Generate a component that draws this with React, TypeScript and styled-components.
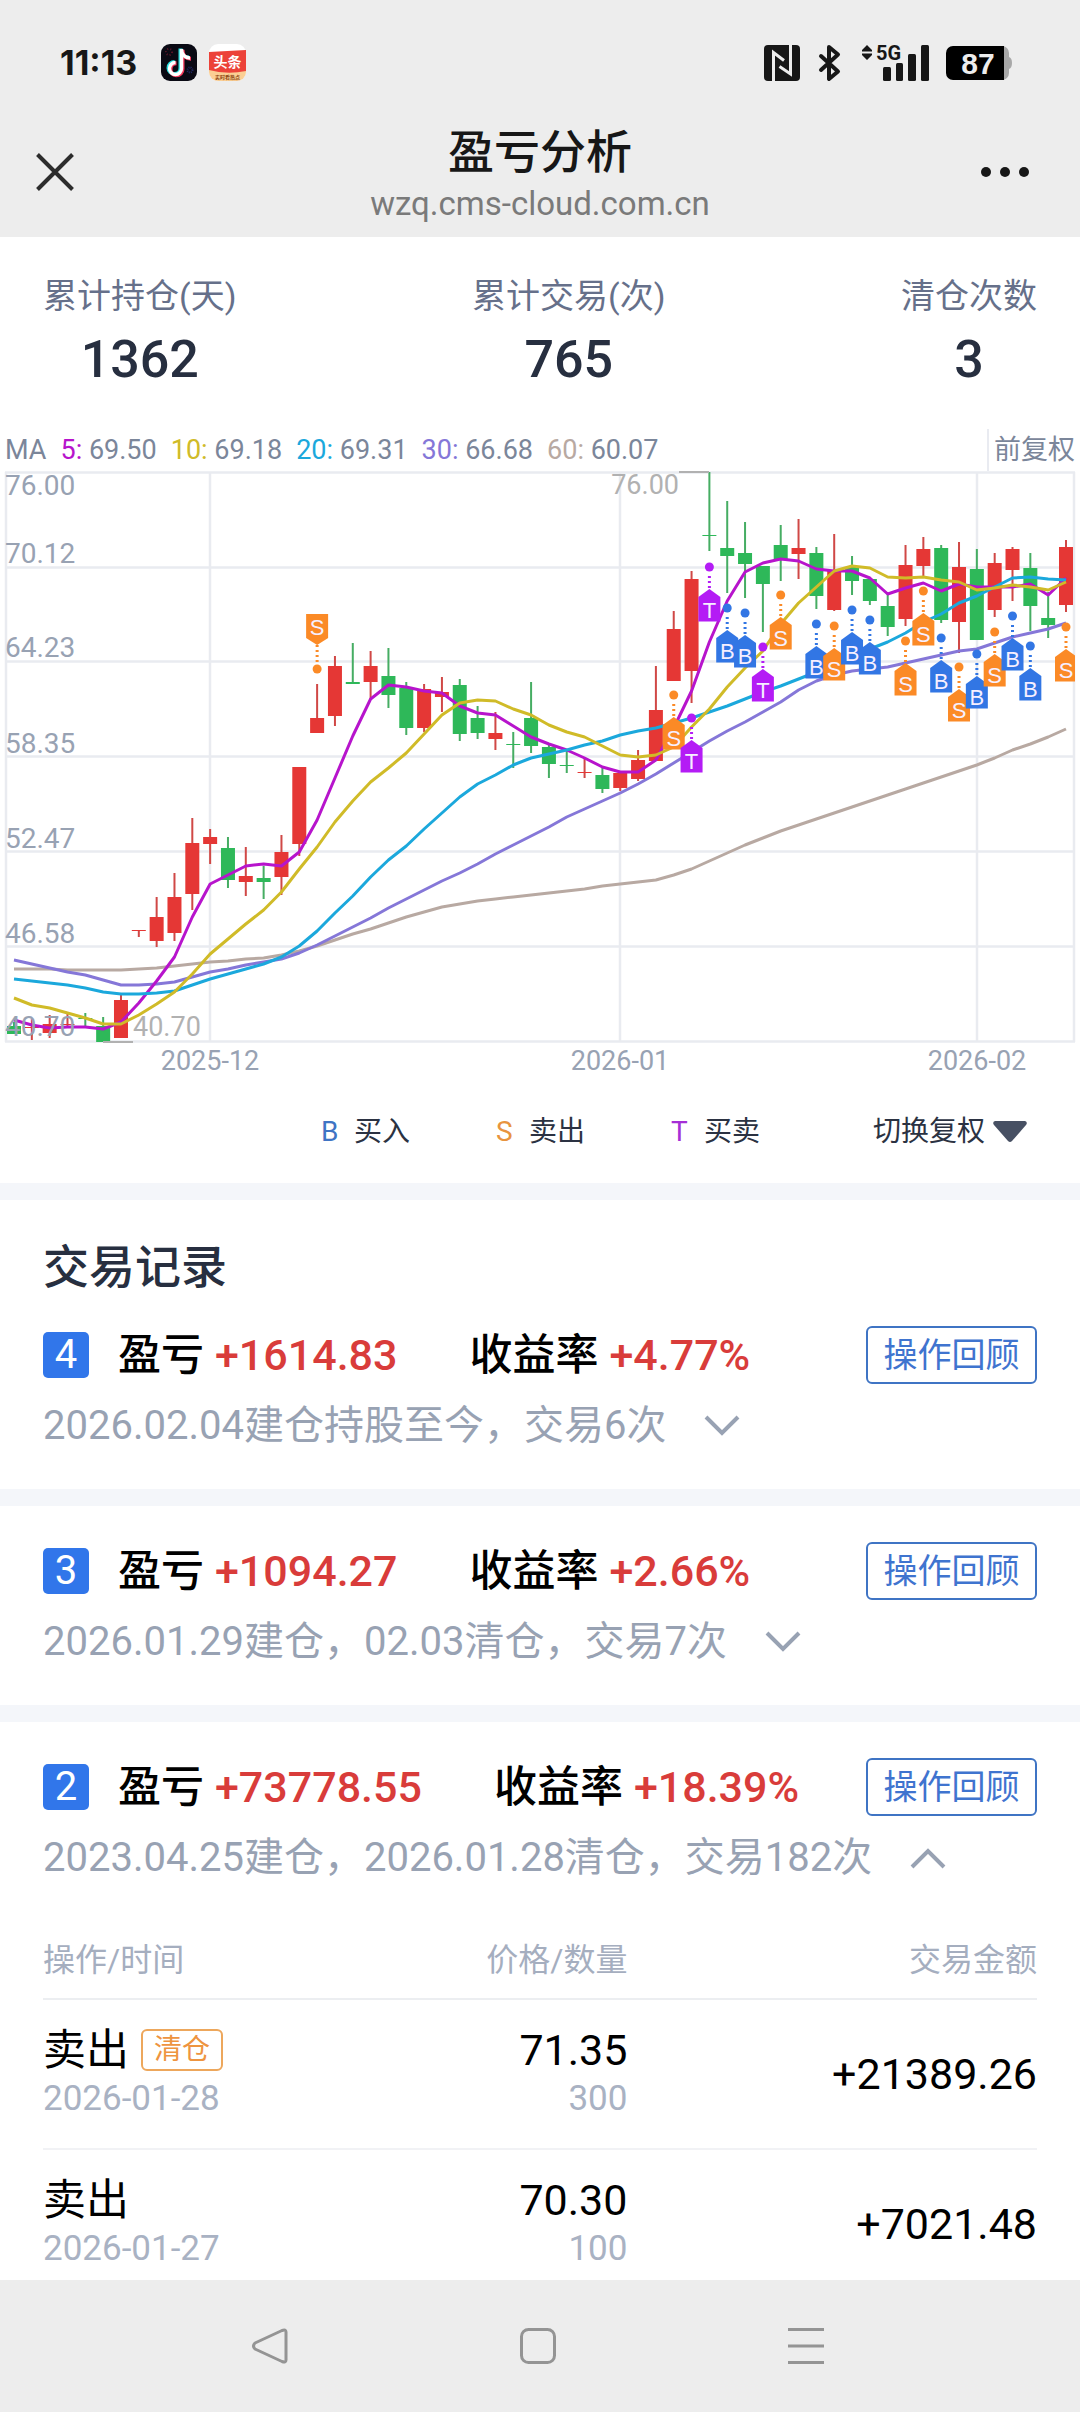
import React, { useState } from "react";
import styled, { createGlobalStyle } from "styled-components";

const GlobalStyle = createGlobalStyle`
  *, *::before, *::after { box-sizing: border-box; }
  body {
    margin: 0;
    background: #fff;
    color: #000;
    font-family: Roboto, "Noto Sans CJK SC", sans-serif;
  }
  button { font: inherit; color: inherit; background: none; border: 0; padding: 0; cursor: pointer; }
  svg { display: block; overflow: visible; }
`;

const ink = "#171717";
const orange = "#fb8a26";
const blue = "#3276e4";
const violet = "#b41cf5";

/* ---------- shell ---------- */

const Shell = styled.div`
  display: flex;
  flex-direction: column;
  height: 100vh;
`;

const Top = styled.header`
  flex: none;
  background: #ededed;
`;

const StatusBar = styled.div`
  display: flex;
  justify-content: space-between;
  align-items: center;
  height: 112px;
  padding: 13px 68px 0 60px;
`;

const StatusGroup = styled.div<{ $gap: number }>`
  display: flex;
  align-items: center;
  gap: ${(p) => p.$gap}px;
`;

const Clock = styled.time`
  font: 700 34px/44px Inter, sans-serif;
  color: ${ink};
  margin-right: 12px;
`;

const TitleBar = styled.div`
  display: grid;
  grid-template-columns: 1fr auto 1fr;
  align-items: center;
  height: 125px;
  padding: 0 36px 5px;
`;

const TitleBlock = styled.div`
  padding-top: 6px;
  text-align: center;
`;

const Title = styled.h1`
  margin: 0;
  font-size: 46px;
  line-height: 58px;
  font-weight: 500;
  color: ${ink};
`;

const Host = styled.div`
  font-size: 33px;
  line-height: 46px;
  color: #7a7a7a;
`;

const IconButton = styled.button<{ $end?: boolean }>`
  display: flex;
  justify-self: ${(p) => (p.$end ? "end" : "start")};
`;

const Content = styled.main`
  flex: 1;
  min-height: 0;
  overflow-y: auto;
  scrollbar-width: none;
`;

const NavBar = styled.nav`
  flex: none;
  display: flex;
  height: 132px;
  padding: 0 140px 0 136px;
  background: #ededed;
`;

const NavButton = styled.button`
  flex: 1;
  display: flex;
  align-items: center;
  justify-content: center;
`;

/* ---------- summary ---------- */

const Stats = styled.dl`
  display: flex;
  justify-content: space-between;
  margin: 0;
  padding: 34px 43px 37px;
  text-align: center;
`;

const StatLabel = styled.dt`
  font-size: 34px;
  line-height: 50px;
  color: #66708a;
`;

const StatValue = styled.dd`
  margin: 0;
  padding-top: 7px;
  font-size: 52px;
  line-height: 64px;
  font-weight: 500;
  color: #272f40;
`;

/* ---------- chart ---------- */

const MaRow = styled.div`
  display: flex;
  align-items: center;
  gap: 14px;
  height: 42px;
  padding: 0 5px;
  font-size: 27px;
  line-height: 42px;
  color: #7b869a;
  white-space: nowrap;
`;

const MaPeriod = styled.span<{ $color: string }>`
  color: ${(p) => p.$color};
`;

const Adjust = styled.span`
  align-self: stretch;
  margin-left: auto;
  padding-left: 5px;
  border-left: 2px solid #e9ebf1;
`;

const ChartSvg = styled.svg`
  width: 100%;
  height: auto;
  font-family: Roboto, sans-serif;
`;

const LegendRow = styled.div`
  display: flex;
  align-items: center;
  justify-content: flex-end;
  height: 103px;
  padding-right: 53px;
  font-size: 28px;
  line-height: 40px;
  color: #2b3242;
`;

const LegendItem = styled.span`
  display: flex;
  width: 175px;
`;

const LegendLetter = styled.span<{ $color: string }>`
  width: 33px;
  color: ${(p) => p.$color};
`;

const SwitchButton = styled.button`
  display: flex;
  align-items: center;
  gap: 8px;
  margin-left: 27px;
`;

/* ---------- records ---------- */

const Record = styled.section`
  padding: 36px 43px 35px;
  border-top: 17px solid #f4f6fa;
`;

const SectionTitle = styled.h2`
  margin: 0 0 28px;
  font-size: 46px;
  line-height: 62px;
  font-weight: 500;
  color: #272f40;
`;

const RecordHead = styled.div`
  display: flex;
  align-items: center;
  height: 58px;
  font-size: 43px;
  line-height: 58px;
  font-weight: 500;
  white-space: nowrap;
`;

const Badge = styled.span`
  width: 46px;
  margin-right: 29px;
  border-radius: 5px;
  background: #3176ea;
  color: #fff;
  font-size: 40px;
  line-height: 46px;
  font-weight: 400;
  text-align: center;
`;

const Figure = styled.span`
  margin-right: 72px;
`;

const Gain = styled.span`
  margin-left: 11px;
  color: #d93c3a;
`;

const ReviewButton = styled.button`
  width: 171px;
  height: 58px;
  margin-left: auto;
  border: 2px solid #3f74c4;
  border-radius: 6px;
  color: #3f74cf;
  font-size: 34px;
  line-height: 54px;
  font-weight: 400;
`;

const Toggle = styled.button`
  display: flex;
  align-items: center;
  gap: 38px;
  margin-top: 14px;
  color: #98a2b3;
  font-size: 40px;
  line-height: 56px;
  white-space: nowrap;
`;

const Trades = styled.table`
  width: 100%;
  margin-top: 45px;
  border-collapse: collapse;
  table-layout: fixed;
`;

const Head = styled.th<{ $width: number; $right?: boolean }>`
  width: ${(p) => p.$width}%;
  height: 68px;
  padding: 0 0 10px;
  border-bottom: 2px solid #eceef1;
  color: #a5aebf;
  font-size: 32px;
  line-height: 46px;
  font-weight: 400;
  text-align: ${(p) => (p.$right ? "right" : "left")};
`;

const Cell = styled.td<{ $right?: boolean }>`
  height: 150px;
  padding: 0;
  border-bottom: 2px solid #f1f2f5;
  font-size: 43px;
  line-height: 50px;
  text-align: ${(p) => (p.$right ? "right" : "left")};
`;

const Action = styled.div`
  display: flex;
  align-items: center;
  gap: 12px;
  height: 50px;
`;

const Tag = styled.span`
  padding: 0 11px;
  border: 2px solid #eda75c;
  border-radius: 6px;
  color: #ee9440;
  font-size: 28px;
  line-height: 38px;
`;

const Minor = styled.div`
  color: #a9b2c3;
  font-size: 35px;
  line-height: 48px;
`;

/* ---------- data ---------- */

type Candle = [high: number, top: number, bottom: number, low: number, up: 0 | 1];

const candles: Candle[] = [
  [562, 566, 574, 574, 0], [559, 567, 568, 580, 1], [555, 564, 573, 578, 1], [553, 564, 565, 567, 1],
  [553, 558, 559, 566, 0], [557, 566, 582, 582, 0], [535, 540, 578, 578, 1], [470, 470, 471, 477, 1],
  [437, 457, 481, 487, 1], [413, 437, 473, 481, 1], [358, 383, 434, 450, 1], [369, 377, 384, 404, 1],
  [377, 388, 420, 428, 0], [387, 416, 422, 436, 1], [406, 418, 422, 439, 0], [375, 392, 417, 435, 1],
  [307, 307, 384, 396, 1], [224, 258, 273, 273, 1], [196, 206, 256, 266, 1], [183, 222, 224, 224, 0],
  [191, 206, 222, 239, 1], [188, 216, 235, 248, 0], [222, 228, 268, 275, 0], [224, 229, 268, 272, 1],
  [217, 232, 237, 252, 1], [219, 225, 274, 281, 0], [246, 258, 273, 279, 0], [252, 273, 279, 290, 1],
  [272, 284, 285, 308, 0], [222, 258, 286, 293, 0], [285, 287, 304, 318, 0], [290, 305, 306, 313, 0],
  [299, 312, 313, 318, 1], [308, 315, 329, 333, 0], [312, 313, 328, 331, 1], [290, 300, 319, 321, 1],
  [206, 250, 301, 301, 1], [151, 169, 221, 221, 1], [111, 119, 211, 243, 1], [12, 75, 76, 91, 0],
  [41, 88, 96, 133, 0], [62, 93, 104, 138, 0], [106, 106, 124, 172, 0], [65, 85, 99, 121, 0],
  [59, 88, 94, 119, 1], [87, 93, 136, 149, 0], [74, 111, 150, 151, 1], [96, 107, 121, 135, 0],
  [118, 119, 141, 145, 0], [134, 146, 167, 176, 0], [85, 105, 159, 166, 1], [77, 89, 106, 117, 1],
  [85, 88, 160, 163, 0], [82, 107, 162, 193, 1], [89, 109, 180, 180, 0], [93, 103, 150, 157, 1],
  [87, 89, 110, 141, 1], [93, 108, 146, 171, 0], [132, 158, 165, 178, 0], [80, 87, 145, 152, 1],
];

const averages = [
  {
    period: "60", value: "60.07", color: "#b8a9a2",
    line: [509, 509, 509, 510, 510, 510, 510, 509, 508, 506, 504, 502, 501, 499, 498, 495, 491, 486, 480, 474, 469, 463, 457, 452, 447, 444, 441, 439, 437, 435, 433, 431, 429, 426, 424, 422, 420, 415, 409, 401, 393, 385, 378, 371, 365, 359, 353, 347, 341, 335, 329, 323, 317, 311, 305, 298, 290, 284, 277, 269],
  },
  {
    period: "30", value: "66.68", color: "#8577d8",
    line: [500, 504, 508, 512, 515, 520, 525, 525, 524, 522, 517, 512, 509, 505, 502, 499, 493, 485, 476, 467, 458, 448, 439, 430, 421, 413, 404, 394, 385, 376, 367, 357, 349, 341, 333, 324, 314, 303, 292, 281, 271, 262, 252, 242, 230, 221, 215, 211, 209, 207, 203, 199, 195, 191, 189, 183, 177, 173, 169, 163],
  },
  {
    period: "5", value: "69.50", color: "#b714cc",
    line: [560, 565, 568, 567, 567, 569, 562, 543, 521, 497, 457, 424, 415, 406, 404, 406, 392, 360, 318, 276, 239, 225, 227, 231, 233, 246, 253, 255, 266, 277, 284, 290, 298, 307, 312, 312, 300, 268, 231, 182, 141, 112, 103, 99, 101, 109, 111, 111, 118, 134, 128, 123, 131, 124, 127, 127, 127, 124, 135, 118],
  },
  {
    period: "20", value: "69.31", color: "#1ba8dc",
    line: [519, 521, 523, 525, 528, 532, 534, 534, 533, 531, 525, 519, 514, 509, 504, 497, 486, 471, 453, 436, 417, 400, 386, 369, 353, 337, 324, 315, 305, 298, 294, 290, 285, 281, 275, 271, 268, 263, 258, 252, 246, 239, 232, 226, 219, 212, 204, 197, 189, 182, 173, 162, 154, 143, 136, 127, 118, 117, 119, 120],
  },
  {
    period: "10", value: "69.18", color: "#d0bb28",
    line: [538, 545, 548, 553, 558, 564, 564, 555, 544, 532, 514, 494, 479, 464, 450, 432, 409, 387, 362, 341, 322, 308, 293, 274, 255, 243, 240, 241, 249, 255, 265, 272, 277, 286, 295, 297, 295, 287, 267, 249, 227, 208, 191, 164, 143, 127, 111, 106, 108, 117, 118, 117, 120, 122, 130, 128, 125, 127, 130, 122],
  },
];

const maOrder = ["5", "10", "20", "30", "60"];

const markers: [index: number, y: number, kind: "B" | "S" | "T"][] = [
  [37, 235, "S"], [38, 258, "T"], [39, 107, "T"], [40, 148, "B"], [41, 153, "B"], [42, 187, "T"],
  [43, 135, "S"], [45, 164, "B"], [46, 166, "S"], [47, 150, "B"], [48, 160, "B"], [50, 181, "S"],
  [51, 131, "S"], [52, 178, "B"], [53, 207, "S"], [54, 194, "B"], [55, 172, "S"], [56, 156, "B"],
  [57, 186, "B"], [59, 167, "S"],
];

const markerColor = { B: blue, S: orange, T: violet };

const priceTicks = [
  { label: "76.00", line: 12, text: 35 },
  { label: "70.12", line: 107, text: 103 },
  { label: "64.23", line: 201, text: 197 },
  { label: "58.35", line: 296, text: 293 },
  { label: "52.47", line: 391, text: 388 },
  { label: "46.58", line: 486, text: 483 },
  { label: "40.70", line: 581, text: 576 },
];

const monthTicks = [
  { label: "2025-12", x: 210 },
  { label: "2026-01", x: 620 },
  { label: "2026-02", x: 977 },
];

const xOf = (i: number) => 14 + (i * 1052) / 59;

const records = [
  { no: 4, profit: "+1614.83", rate: "+4.77%", note: "2026.02.04建仓持股至今，交易6次", trades: [] },
  { no: 3, profit: "+1094.27", rate: "+2.66%", note: "2026.01.29建仓，02.03清仓，交易7次", trades: [] },
  {
    no: 2, profit: "+73778.55", rate: "+18.39%", note: "2023.04.25建仓，2026.01.28清仓，交易182次",
    trades: [
      { action: "卖出", tag: "清仓", date: "2026-01-28", price: "71.35", count: "300", amount: "+21389.26" },
      { action: "卖出", tag: "", date: "2026-01-27", price: "70.30", count: "100", amount: "+7021.48" },
    ],
  },
];

/* ---------- pieces ---------- */

function DouyinIcon() {
  const note = "M20.5 5V24.5a6 6 0 1 1-6-6M20.5 5c0 6 4 9 8.5 9";
  return (
    <svg width="36" height="37" viewBox="0 0 36 37" fill="none" strokeWidth="4" aria-hidden="true">
      <rect width="36" height="37" rx="9" fill="#0a0a14" />
      <circle cx="8" cy="8" r="3" stroke="#5e1528" strokeWidth="2" strokeDasharray="1 2" />
      <circle cx="29" cy="26" r="2.5" stroke="#242a66" strokeWidth="2" strokeDasharray="1 1" />
      <path d={note} stroke="#28dfe0" transform="translate(-1 -.6)" />
      <path d={note} stroke="#f4385b" transform="translate(1 .8)" />
      <path d={note} stroke="#fff" strokeWidth="3.4" />
    </svg>
  );
}

function ToutiaoIcon() {
  return (
    <svg width="37" height="37" viewBox="0 0 37 37" aria-hidden="true">
      <rect width="37" height="37" rx="9" fill="#fff" />
      <path d="M0 25H37V28a9 9 0 0 1-9 9H9a9 9 0 0 1-9-9z" fill="#fbcf94" />
      <path d="M0 8 37 6V27Q18 31 0 26z" fill="#ec4239" />
      <text x="18.5" y="23" textAnchor="middle" fontSize="14" fontWeight="700" fill="#fff" fontFamily="Noto Sans CJK SC, sans-serif">头条</text>
      <text x="18.5" y="35" textAnchor="middle" fontSize="5" fontWeight="700" fill="#8a4310" fontFamily="Noto Sans CJK SC, sans-serif">实时看热点</text>
    </svg>
  );
}

function NfcIcon() {
  return (
    <svg width="36" height="36" viewBox="0 0 36 36" fill="none" stroke="#ededed" strokeWidth="3" aria-hidden="true">
      <rect width="36" height="36" rx="4" fill={ink} stroke="none" />
      <path d="M9.5 36V7.5L20 15.5M26.5 0V29L15.5 21.5" />
    </svg>
  );
}

function BluetoothIcon() {
  return (
    <svg width="22" height="36" viewBox="0 0 22 36" fill="none" stroke={ink} strokeWidth="4" strokeLinejoin="round" strokeLinecap="round" aria-hidden="true">
      <path d="M2 11 19 26.5 10 34V2L19 9.5 2 25" />
    </svg>
  );
}

function SignalIcon() {
  return (
    <svg width="67" height="38" viewBox="-2 0 67 38" fill={ink} aria-hidden="true">
      <path d="M0 6 5 1 10 6zM0 11H10L5 16zM0 6h10v1.5H0zM0 9.5h10v1.5H0z" />
      <text x="14" y="16" fontSize="20" fontWeight="700" fontFamily="Roboto, sans-serif">5G</text>
      <rect x="21" y="23" width="8" height="14" rx="1.5" />
      <rect x="34" y="19" width="7" height="18" rx="1.5" />
      <rect x="46" y="10" width="8" height="27" rx="1.5" />
      <rect x="59" y="1" width="8" height="36" rx="1.5" />
    </svg>
  );
}

function BatteryIcon() {
  return (
    <svg width="66" height="34" viewBox="0 0 66 34" aria-hidden="true">
      <path d="M50 0h6a7 7 0 0 1 7 7v4q3 1 3 6t-3 6v4a7 7 0 0 1-7 7h-6z" fill="#a8a8a8" />
      <path d="M7 0H58V34H7a7 7 0 0 1-7-7V7a7 7 0 0 1 7-7z" fill="#000" />
      <text x="32" y="28" textAnchor="middle" fontSize="30" fontWeight="700" fill="#ededed" fontFamily="Liberation Sans, sans-serif">87</text>
    </svg>
  );
}

function Letter({ y, children }: { y: number; children: string }) {
  return (
    <text y={y} textAnchor="middle" fontSize="22" fill="#f6efff" fontFamily="Liberation Sans, sans-serif">
      {children}
    </text>
  );
}

function Marker({ x, y, kind }: { x: number; y: number; kind: "B" | "S" | "T" }) {
  const color = markerColor[kind];
  return (
    <g transform={`translate(${x} ${y})`}>
      <circle r="4.5" fill={color} />
      <path d="M0 9V22" stroke={color} strokeWidth="3" strokeDasharray="2 3" />
      <path d="M0 22 11 30V54.5H-11V30z" fill={color} />
      <Letter y={51}>{kind}</Letter>
    </g>
  );
}

function CandleChart() {
  return (
    <ChartSvg viewBox="0 11 1080 609" role="img" aria-label="K线图">
      <defs>
        <clipPath id="plot"><rect x="5" y="0" width="1070" height="620" /></clipPath>
      </defs>
      <g stroke="#e9ebf0" strokeWidth="2.5">
        {priceTicks.map((t) => <path key={t.label} d={`M5 ${t.line + 0.5}H1075`} />)}
        {[6, ...monthTicks.map((m) => m.x), 1074].map((x) => <path key={x} d={`M${x} 12V582`} />)}
      </g>
      <g clipPath="url(#plot)">
        {candles.map(([high, top, bottom, low, up], i) => {
          const color = up ? "#e53735" : "#2eb859";
          return (
            <g key={i} fill={color}>
              <rect x={xOf(i) - 1} y={high} width="2" height={low - high} fill={up ? "#d04846" : "#46ad63"} />
              <rect x={xOf(i) - 7} y={top} width="14" height={bottom - top} />
            </g>
          );
        })}
        <g stroke="#b1b1b1" strokeWidth="2"><path d="M679 12H709M103 582H133" /></g>
        {averages.map((a) => (
          <polyline
            key={a.period}
            points={a.line.map((y, i) => `${xOf(i)},${y}`).join(" ")}
            fill="none" stroke={a.color} strokeWidth="3" strokeLinejoin="round"
          />
        ))}
        {markers.map(([i, y, kind]) => <Marker key={i} x={xOf(i)} y={y} kind={kind} />)}
        <g transform={`translate(${xOf(17)} 209)`}>
          <circle r="4.5" fill={orange} />
          <path d="M0-7V-24" stroke={orange} strokeWidth="3" strokeDasharray="2 3" />
          <path d="M-11-55H11V-31L0-24-11-31z" fill={orange} />
          <Letter y={-34}>S</Letter>
        </g>
      </g>
      <g fill="#98a2b3">
        {priceTicks.map((t) => <text key={t.label} x="5" y={t.text} fontSize="28">{t.label}</text>)}
        {monthTicks.map((m) => <text key={m.label} x={m.x} y="610" fontSize="27" textAnchor="middle">{m.label}</text>)}
      </g>
      <g fontSize="27" fill="#b1b1b1">
        <text x="679" y="34" textAnchor="end">76.00</text>
        <text x="133" y="576">40.70</text>
      </g>
    </ChartSvg>
  );
}

function RecordCard({ record, title }: { record: (typeof records)[number]; title?: string }) {
  const [open, setOpen] = useState(record.trades.length > 0);
  return (
    <Record>
      {title && <SectionTitle>{title}</SectionTitle>}
      <RecordHead>
        <Badge>{record.no}</Badge>
        <Figure>盈亏<Gain>{record.profit}</Gain></Figure>
        <span>收益率<Gain>{record.rate}</Gain></span>
        <ReviewButton type="button">操作回顾</ReviewButton>
      </RecordHead>
      <Toggle type="button" aria-expanded={open} onClick={() => setOpen(!open)}>
        {record.note}
        <svg width="36" height="22" viewBox="0 0 36 22" fill="none" stroke="currentColor" strokeWidth="4" aria-hidden="true">
          <path d={open ? "M2 20 18 4 34 20" : "M2 2 18 18 34 2"} />
        </svg>
      </Toggle>
      {open && record.trades.length > 0 && (
        <Trades>
          <thead>
            <tr>
              <Head $width={32}>操作/时间</Head>
              <Head $width={26.8} $right>价格/数量</Head>
              <Head $width={41.2} $right>交易金额</Head>
            </tr>
          </thead>
          <tbody>
            {record.trades.map((t) => (
              <tr key={t.date}>
                <Cell>
                  <Action>{t.action}{t.tag && <Tag>{t.tag}</Tag>}</Action>
                  <Minor>{t.date}</Minor>
                </Cell>
                <Cell $right>{t.price}<Minor>{t.count}</Minor></Cell>
                <Cell $right>{t.amount}</Cell>
              </tr>
            ))}
          </tbody>
        </Trades>
      )}
    </Record>
  );
}

export default function App() {
  return (
    <>
      <GlobalStyle />
      <Shell>
        <Top>
          <StatusBar>
            <StatusGroup $gap={12}>
              <Clock>11:13</Clock>
              <DouyinIcon />
              <ToutiaoIcon />
            </StatusGroup>
            <StatusGroup $gap={19}>
              <NfcIcon />
              <BluetoothIcon />
              <SignalIcon />
              <BatteryIcon />
            </StatusGroup>
          </StatusBar>
          <TitleBar>
            <IconButton type="button" aria-label="关闭">
              <svg width="38" height="38" viewBox="0 0 38 38" stroke="#2c2c2c" strokeWidth="4">
                <path d="M1.5 1.5 36.5 36.5M36.5 1.5 1.5 36.5" />
              </svg>
            </IconButton>
            <TitleBlock>
              <Title>盈亏分析</Title>
              <Host>wzq.cms-cloud.com.cn</Host>
            </TitleBlock>
            <IconButton type="button" aria-label="更多" $end>
              <svg width="64" height="12" viewBox="0 0 64 12" fill={ink}>
                <circle cx="6" cy="6" r="5" /><circle cx="25" cy="6" r="5" /><circle cx="44" cy="6" r="5" />
              </svg>
            </IconButton>
          </TitleBar>
        </Top>

        <Content>
          <Stats>
            <div><StatLabel>累计持仓(天)</StatLabel><StatValue>1362</StatValue></div>
            <div><StatLabel>累计交易(次)</StatLabel><StatValue>765</StatValue></div>
            <div><StatLabel>清仓次数</StatLabel><StatValue>3</StatValue></div>
          </Stats>

          <MaRow>
            <span>MA</span>
            {maOrder.map((p) => {
              const a = averages.find((x) => x.period === p)!;
              return <span key={p}><MaPeriod $color={a.color}>{p}:</MaPeriod> {a.value}</span>;
            })}
            <Adjust>前复权</Adjust>
          </MaRow>
          <CandleChart />
          <LegendRow>
            <LegendItem><LegendLetter $color="#3f74c4">B</LegendLetter>买入</LegendItem>
            <LegendItem><LegendLetter $color="#e8943f">S</LegendLetter>卖出</LegendItem>
            <LegendItem><LegendLetter $color="#a52fd6">T</LegendLetter>买卖</LegendItem>
            <SwitchButton type="button">
              切换复权
              <svg width="34" height="21" viewBox="0 0 34 21" fill="#475063" aria-hidden="true">
                <path d="M2 0H32Q35 1 33 4L19 20Q17 22 15 20L1 4Q-1 1 2 0z" />
              </svg>
            </SwitchButton>
          </LegendRow>

          {records.map((r, i) => (
            <RecordCard key={r.no} record={r} title={i === 0 ? "交易记录" : undefined} />
          ))}
        </Content>

        <NavBar aria-label="系统导航">
          <NavButton type="button" aria-label="返回">
            <svg width="36" height="36" viewBox="0 0 36 36" fill="none" stroke="#949494" strokeWidth="3" strokeLinejoin="round">
              <path d="M30 2.5 3 15Q0 18 3 21L30 33.5Q34 35 34 32V4Q34 1 30 2.5z" />
            </svg>
          </NavButton>
          <NavButton type="button" aria-label="主屏幕">
            <svg width="36" height="36" viewBox="0 0 36 36" fill="none" stroke="#949494" strokeWidth="3">
              <rect x="1.5" y="1.5" width="33" height="33" rx="7" />
            </svg>
          </NavButton>
          <NavButton type="button" aria-label="最近任务">
            <svg width="36" height="36" viewBox="0 0 36 36" stroke="#949494" strokeWidth="3">
              <path d="M0 1.5H36M0 18H36M0 34.5H36" />
            </svg>
          </NavButton>
        </NavBar>
      </Shell>
    </>
  );
}
